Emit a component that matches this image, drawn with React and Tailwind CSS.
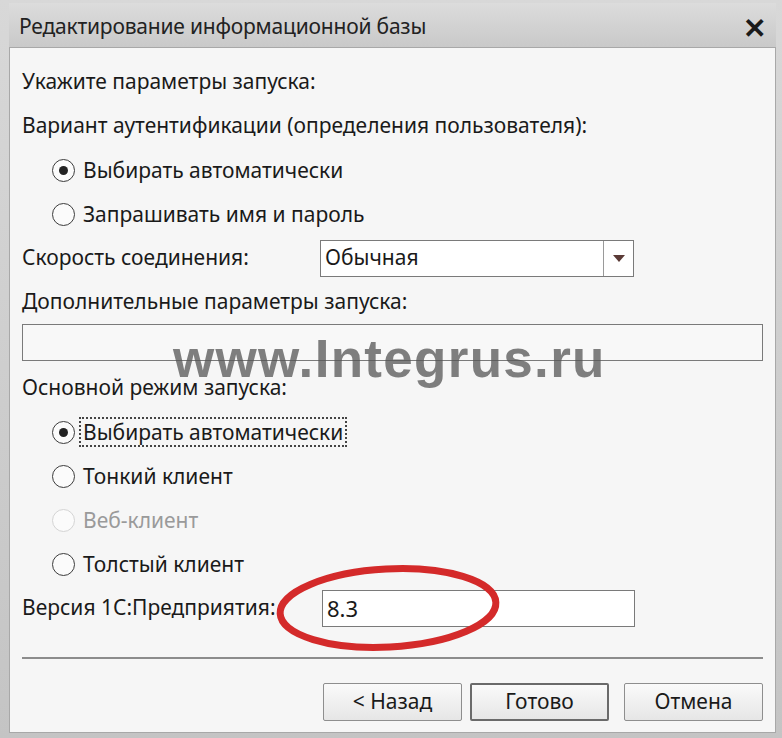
import React from "react";

const font = { fontFamily: '"Noto Sans", "Open Sans", sans-serif' };

function Radio({ checked, disabled, label, focus }) {
  return (
    <div className="flex items-center h-[44px] pl-[30px]">
      <div
        className={`w-[23px] h-[23px] rounded-full border flex items-center justify-center bg-[#fbfbfb] ${
          disabled ? "border-[#d4d4d4]" : "border-[#3c3c3c]"
        }`}
      >
        {checked && <div className="w-[9px] h-[9px] rounded-full bg-[#222]" />}
      </div>
      <span
        className={`ml-[4px] pl-[2px] pr-[2px] leading-[26px] ${
          disabled ? "text-[#9a9a9a]" : "text-[#1a1a1a]"
        } ${focus ? "border-2 border-dotted border-[#444]" : "border-2 border-transparent"}`}
      >
        {label}
      </span>
    </div>
  );
}

function Btn({ children, def, className = "" }) {
  return (
    <div
      className={`w-[139px] h-[38px] flex items-center justify-center bg-gradient-to-b from-[#fafafa] to-[#e6e6e6] rounded-[2px] text-[#1a1a1a] ${
        def ? "border-2 border-[#6a6a6a]" : "border border-[#8e8e8e]"
      } ${className}`}
    >
      {children}
    </div>
  );
}

export default function App() {
  return (
    <div
      className="w-[782px] h-[738px] bg-gradient-to-b from-[#d8d8d8] to-[#c4c4c4] pt-[3px] pl-[9px] pr-[6px] pb-[5px] flex flex-col text-[21px] overflow-hidden relative"
      style={font}
    >
      <div className="h-[44px] flex items-center justify-between pl-[10px] pr-[10px] bg-gradient-to-b from-[#dcdcdc] to-[#c9c9c9]">
        <span className="text-[21px] text-[#222] tracking-[-0.2px] mt-[3px]">Редактирование информационной базы</span>
        <span className="text-[28px] font-bold text-[#1a1a1a] leading-none mt-[3px]">✕</span>
      </div>
      <div className="flex-1 bg-[#f6f6f6] border border-[#a8a8a8] flex flex-col pl-[12px] pr-[12px] pt-[12px] text-[#1a1a1a]">
        <div className="h-[44px] flex items-center">Укажите параметры запуска:</div>
        <div className="h-[44px] flex items-center">Вариант аутентификации (определения пользователя):</div>
        <Radio checked label="Выбирать автоматически" />
        <Radio label="Запрашивать имя и пароль" />
        <div className="flex items-center h-[44px]">
          <span className="w-[298px]">Скорость соединения:</span>
          <div className="w-[314px] h-[37px] border border-[#7a7a7a] bg-white flex items-stretch">
            <div className="flex-1 flex items-center pl-[4px]">Обычная</div>
            <div className="w-[30px] border-l border-[#9a9a9a] flex items-center justify-center">
              <svg width="12" height="7" viewBox="0 0 12 7">
                <path d="M0 0 L12 0 L6 7 Z" fill="#5a3a36" />
              </svg>
            </div>
          </div>
        </div>
        <div className="h-[44px] flex items-center">Дополнительные параметры запуска:</div>
        <div className="h-[37px] border border-[#7a7a7a] bg-[#f8f8f8]" />
        <div className="h-[44px] mt-[5px] flex items-center">Основной режим запуска:</div>
        <Radio checked focus label="Выбирать автоматически" />
        <Radio label="Тонкий клиент" />
        <Radio disabled label="Веб-клиент" />
        <Radio label="Толстый клиент" />
        <div className="flex items-center h-[44px]">
          <span className="w-[300px]">Версия 1С:Предприятия:</span>
          <div className="w-[313px] h-[37px] border border-[#7a7a7a] bg-white flex items-center pl-[4px] text-[22px]">
            8.3
          </div>
        </div>
        <div className="h-[29px] border-b-2 border-[#8c8c8c]" />
        <div className="flex justify-end pt-[24px]">
          <Btn>&lt; Назад</Btn>
          <Btn def className="ml-[8px]">Готово</Btn>
          <Btn className="ml-[15px]">Отмена</Btn>
        </div>
      </div>
      <div
        className="absolute left-[173px] top-[332px] text-[53px] leading-none font-bold text-[#555]/75 tracking-[1.3px] pointer-events-none"
        style={{ fontFamily: '"Liberation Sans", "DejaVu Sans", sans-serif' }}
      >
        www.Integrus.ru
      </div>
      <svg className="absolute left-[274px] top-[562px] pointer-events-none" width="230" height="95" viewBox="0 0 230 95">
        <ellipse cx="114" cy="46" rx="108" ry="39" fill="none" stroke="#d42a2a" strokeWidth="7" transform="rotate(-3 114 46)" />
      </svg>
    </div>
  );
}
